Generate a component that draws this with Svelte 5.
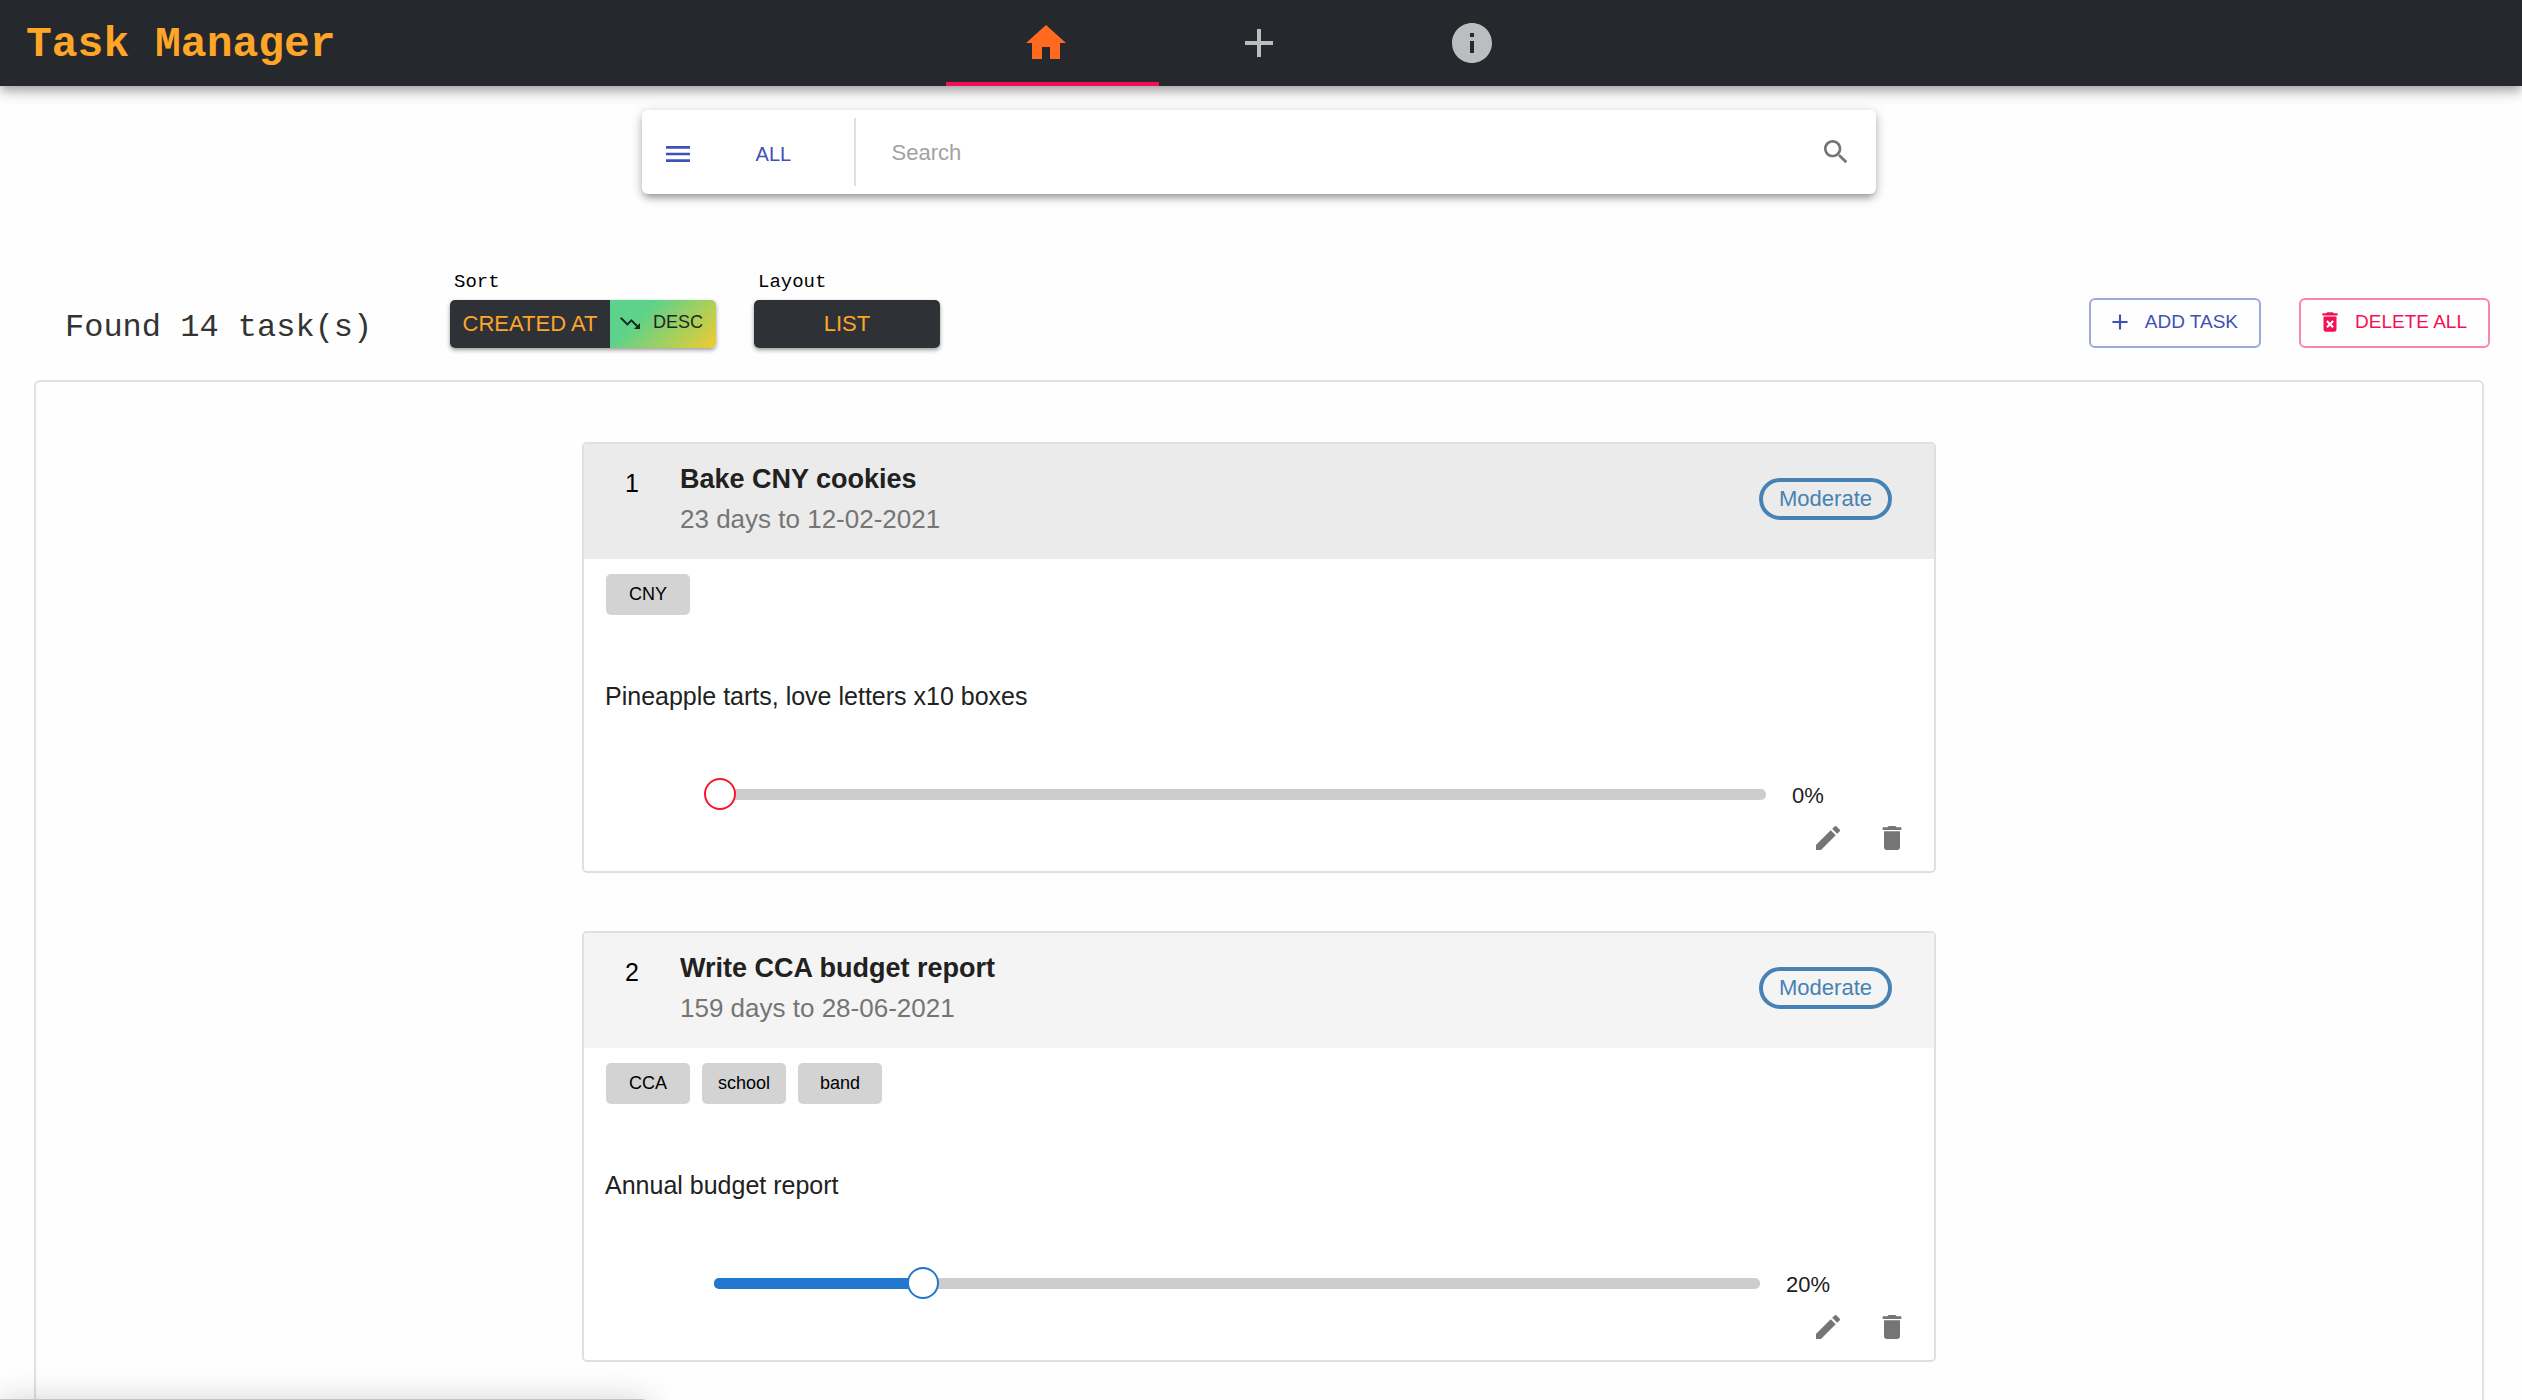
<script lang="ts">
  const icons = {
    home: 'M10 20v-6h4v6h5v-8h3L12 3 2 12h3v8z',
    add: 'M19 13h-6v6h-2v-6H5v-2h6V5h2v6h6v2z',
    info: 'M12 2C6.48 2 2 6.48 2 12s4.48 10 10 10 10-4.48 10-10S17.52 2 12 2zm1 15h-2v-6h2v6zm0-8h-2V7h2v2z',
    menu: 'M3 18h18v-2H3v2zm0-5h18v-2H3v2zm0-7v2h18V6H3z',
    search:
      'M15.5 14h-.79l-.28-.27C15.41 12.59 16 11.11 16 9.5 16 5.91 13.09 3 9.5 3S3 5.91 3 9.5 5.91 16 9.5 16c1.61 0 3.09-.59 4.23-1.57l.27.28v.79l5 4.99L20.49 19l-4.99-5zm-6 0C7.01 14 5 11.99 5 9.5S7.01 5 9.5 5 14 7.01 14 9.5 11.99 14 9.5 14z',
    down: 'M16 18l2.29-2.29-4.88-4.88-4 4L2 7.41 3.41 6l6 6 4-4 6.3 6.29L22 12v6z',
    clear:
      'M6 19c0 1.1.9 2 2 2h8c1.1 0 2-.9 2-2V7H6v12zm2.46-7.12l1.41-1.41L12 12.59l2.12-2.12 1.41 1.41L13.41 14l2.12 2.12-1.41 1.41L12 15.41l-2.12 2.12-1.41-1.41L10.59 14l-2.13-2.12zM15.5 4l-1-1h-5l-1 1H5v2h14V4z',
    edit: 'M3 17.25V21h3.75L17.81 9.94l-3.75-3.75L3 17.25zM20.71 7.04c.39-.39.39-1.02 0-1.41l-2.34-2.34c-.39-.39-1.02-.39-1.41 0l-1.83 1.83 3.75 3.75 1.83-1.83z',
    trash: 'M6 19c0 1.1.9 2 2 2h8c1.1 0 2-.9 2-2V7H6v12zM19 4h-3.5l-1-1h-5l-1 1H5v2h14V4z',
  };

  let query = $state('');

  let tasks = $state([
    {
      title: 'Bake CNY cookies',
      due: '23 days to 12-02-2021',
      priority: 'Moderate',
      tags: ['CNY'],
      details: 'Pineapple tarts, love letters x10 boxes',
      progress: 0,
      active: true,
    },
    {
      title: 'Write CCA budget report',
      due: '159 days to 28-06-2021',
      priority: 'Moderate',
      tags: ['CCA', 'school', 'band'],
      details: 'Annual budget report',
      progress: 20,
      active: false,
    },
  ]);
</script>

{#snippet icon(name: keyof typeof icons, size: string)}
  <svg class={['icon', size]} viewBox="0 0 24 24" aria-hidden="true"><path d={icons[name]} /></svg>
{/snippet}

<div class="page">
  <header class="topbar">
    <h1>Task Manager</h1>
    <nav class="tabs">
      <a class="tab selected" href="#home" aria-label="Home">{@render icon('home', 'xl')}</a>
      <a class="tab" href="#add" aria-label="Add">{@render icon('add', 'xl')}</a>
      <a class="tab" href="#about" aria-label="About">{@render icon('info', 'xl')}</a>
    </nav>
  </header>

  <div class="search-area">
    <form class="search">
      <button class="filter" type="button">{@render icon('menu', 'lg')}<span>ALL</span></button>
      <span class="divider"></span>
      <input type="text" placeholder="Search" aria-label="Search" bind:value={query} />
      <button class="go" type="button" aria-label="Run search">{@render icon('search', 'lg')}</button>
    </form>
  </div>

  <div class="toolbar">
    <p class="found">Found 14 task(s)</p>
    <div class="group">
      <span class="caption" id="sort-caption">Sort</span>
      <div class="joined" role="group" aria-labelledby="sort-caption">
        <button class="dark sort" type="button">CREATED AT</button>
        <button class="order" type="button">{@render icon('down', 'sm')}<span>DESC</span></button>
      </div>
    </div>
    <div class="group">
      <span class="caption" id="layout-caption">Layout</span>
      <div class="joined" role="group" aria-labelledby="layout-caption">
        <button class="dark layout" type="button">LIST</button>
      </div>
    </div>
    <div class="actions">
      <button class="outlined add" type="button">{@render icon('add', 'md')}<span>ADD TASK</span></button>
      <button class="outlined remove" type="button">{@render icon('clear', 'md')}<span>DELETE ALL</span></button>
    </div>
  </div>

  <main class="board">
    {#each tasks as task, i}
      <article class="card">
        <div class={['card-head', { active: task.active }]}>
          <span class="number">{i + 1}</span>
          <div class="heading">
            <h2>{task.title}</h2>
            <p>{task.due}</p>
          </div>
          <span class="pill">{task.priority}</span>
        </div>
        <div class="card-body">
          <ul class="tags">
            {#each task.tags as tag}
              <li>{tag}</li>
            {/each}
          </ul>
          <p class="details">{task.details}</p>
          <div class="progress">
            <div class={['slider', { empty: task.progress === 0 }]}>
              <div class="rail"><div class="fill" style="width: {task.progress}%"></div></div>
              <input type="range" min="0" max="100" aria-label="Progress of {task.title}" bind:value={task.progress} />
            </div>
            <output>{task.progress}%</output>
          </div>
          <div class="card-actions">
            <button type="button" aria-label="Edit">{@render icon('edit', 'lg')}</button>
            <button type="button" aria-label="Delete">{@render icon('trash', 'lg')}</button>
          </div>
        </div>
      </article>
    {/each}
  </main>

  <div class="status-edge"></div>
</div>

<style>
  :global(body) {
    background: #fefefe;
  }

  .page {
    display: flex;
    flex-direction: column;
    height: 100vh;
    overflow: hidden;
    font-family: 'Liberation Sans', Arial, sans-serif;
    color: #212121;
  }

  h1,
  h2,
  p,
  ul {
    margin: 0;
    padding: 0;
  }

  button,
  input {
    font-family: inherit;
    margin: 0;
    padding: 0;
    border: 0;
    background: none;
    box-sizing: border-box;
  }

  button {
    display: flex;
    align-items: center;
    cursor: pointer;
  }

  .icon {
    flex: none;
    display: block;
    fill: currentColor;
  }
  .sm { width: 24px; height: 24px; }
  .md { width: 26px; height: 26px; }
  .lg { width: 32px; height: 32px; }
  .xl { width: 48px; height: 48px; }

  .topbar {
    display: flex;
    flex: none;
    height: 86px;
    background: #25282d;
    box-shadow:
      0 4px 8px -2px rgba(0, 0, 0, 0.2),
      0 8px 10px rgba(0, 0, 0, 0.14),
      0 2px 20px rgba(0, 0, 0, 0.12);
  }

  h1 {
    flex: 0 0 37.5%;
    box-sizing: border-box;
    padding: 2px 0 0 26px;
    font: bold 43px/86px 'Liberation Mono', 'Courier New', monospace;
    color: #ffa527;
    white-space: nowrap;
  }

  .tabs {
    display: flex;
  }

  .tab {
    display: flex;
    align-items: center;
    justify-content: center;
    box-sizing: border-box;
    width: 213px;
    padding-right: 12px;
    color: #bcbdbf;
  }
  .tab.selected {
    color: #ff6a1f;
    box-shadow: inset 0 -4px #f50f57;
  }

  .search-area {
    flex: none;
    display: flex;
    justify-content: center;
    padding: 24px 38px 0 34px;
  }

  .search {
    display: flex;
    align-items: center;
    width: 50.4%;
    min-width: 600px;
    height: 84px;
    border-radius: 6px;
    background: #fff;
    box-shadow:
      0 6px 6px -4px rgba(0, 0, 0, 0.2),
      0 4px 8px rgba(0, 0, 0, 0.22),
      0 2px 14px rgba(0, 0, 0, 0.12);
  }

  .filter {
    flex: none;
    gap: 62px;
    width: 212px;
    height: 84px;
    padding: 4px 0 0 20px;
    font-size: 20px;
    color: #3f51b5;
  }

  .divider {
    flex: none;
    width: 2px;
    height: 68px;
    background: #e0e0e0;
  }

  .search input {
    flex: 1;
    min-width: 0;
    height: 68px;
    padding: 2px 0 0 36px;
    font-size: 22px;
    outline: none;
  }
  .search input::placeholder {
    color: #a2a2a2;
    opacity: 1;
  }

  .go {
    flex: none;
    padding-right: 24px;
    color: #757575;
  }

  .toolbar {
    flex: none;
    display: flex;
    align-items: flex-end;
    gap: 38px;
    padding: 76px 32px 32px 65px;
  }

  .found {
    flex: 0 0 347px;
    font: 32px/40px 'Liberation Mono', 'Courier New', monospace;
    color: #333;
    white-space: nowrap;
  }

  .caption {
    display: block;
    margin-bottom: 6px;
    padding-left: 4px;
    font: 19px/24px 'Liberation Mono', 'Courier New', monospace;
    color: #000;
  }

  .joined {
    display: flex;
    border-radius: 5px;
    box-shadow: 0 2px 4px rgba(0, 0, 0, 0.4);
  }

  .dark {
    justify-content: center;
    height: 48px;
    background: #2e3136;
    color: #ffa527;
    font-size: 22px;
    border-radius: 5px;
  }
  .sort {
    width: 160px;
    border-radius: 5px 0 0 5px;
  }
  .layout {
    width: 186px;
  }

  .order {
    gap: 11px;
    width: 106px;
    height: 48px;
    padding: 0 0 3px 8px;
    border-radius: 0 5px 5px 0;
    background: linear-gradient(135deg, #5dd28a 30%, #f0cc30 100%);
    font-size: 18px;
    color: #1b2a1f;
  }

  .actions {
    display: flex;
    gap: 38px;
    margin-left: auto;
  }

  .outlined {
    gap: 12px;
    height: 50px;
    padding: 0 21px 2px 16px;
    border: 2px solid;
    border-radius: 6px;
    font-size: 19px;
    white-space: nowrap;
  }
  .add {
    border-color: #9fa8da;
    color: #3f51b5;
  }
  .remove {
    border-color: #fa87ab;
    color: #f50f57;
  }

  .board {
    flex: 1;
    min-height: 0;
    display: grid;
    grid-template-columns: 546fr 1354fr 546fr;
    grid-auto-rows: max-content;
    row-gap: 58px;
    margin: 0 38px 0 34px;
    padding-top: 60px;
    border: 2px solid #e0e0e0;
    border-bottom: 0;
    border-radius: 6px 6px 0 0;
  }

  .card {
    grid-column: 2;
    border: 2px solid #e0e0e0;
    border-radius: 5px;
    overflow: hidden;
    background: #fff;
  }

  .card-head {
    display: flex;
    padding: 15px 42px 20px 0;
    background: #f4f4f4;
  }
  .card-head.active {
    background: #ebebeb;
  }

  .number {
    flex: none;
    width: 96px;
    padding-top: 4px;
    font-size: 25px;
    line-height: 40px;
    text-align: center;
    color: #000;
  }

  .heading {
    flex: 1;
    line-height: 40px;
  }
  h2 {
    font-size: 27px;
    line-height: 40px;
  }
  .heading p {
    font-size: 26px;
    color: #757575;
  }

  .pill {
    align-self: center;
    box-sizing: border-box;
    height: 42px;
    padding: 0 16px;
    border: 4px solid #4682b4;
    border-radius: 21px;
    font-size: 22px;
    line-height: 34px;
    color: #4682b4;
  }

  .card-body {
    padding: 15px 0 9px;
  }

  .tags {
    display: flex;
    gap: 12px;
    padding-left: 22px;
    list-style: none;
  }
  .tags li {
    min-width: 84px;
    border-radius: 5px;
    background: #d3d3d3;
    font-size: 18px;
    line-height: 41px;
    text-align: center;
    color: #000;
  }

  .details {
    margin-top: 61px;
    padding-left: 21px;
    font-size: 25px;
    line-height: 40px;
  }

  .progress {
    display: flex;
    align-items: center;
    justify-content: center;
    gap: 26px;
    margin-top: 62px;
    padding-left: 26px;
  }
  .progress output {
    padding-top: 4px;
    font-size: 22px;
    line-height: 28px;
  }

  .slider {
    --accent: #2277d0;
    flex: 0 0 79%;
    display: grid;
    align-items: center;
  }
  .slider.empty {
    --accent: #f8172a;
  }

  .rail,
  .slider input {
    grid-area: 1 / 1;
  }

  .rail {
    height: 11px;
    border-radius: 5px;
    background: #cdcdcd;
    overflow: hidden;
  }
  .fill {
    height: 100%;
    background: var(--accent);
  }

  /* The input overhangs the rail by half a thumb on each side. */
  .slider input {
    appearance: none;
    width: calc(100% + 32px);
    height: 32px;
    margin: 0 -16px;
    outline: none;
  }
  .slider input::-webkit-slider-thumb {
    appearance: none;
    box-sizing: border-box;
    width: 32px;
    height: 32px;
    border: 2px solid var(--accent);
    border-radius: 50%;
    background: #fff;
  }

  .card-actions {
    display: flex;
    justify-content: flex-end;
    gap: 16px;
    margin-top: 4px;
    padding-right: 18px;
  }
  .card-actions button {
    padding: 8px;
    color: #757575;
  }

  /* Top edge of the link status bubble, peeking in from below. */
  .status-edge {
    position: fixed;
    left: 0;
    bottom: -47px;
    width: 648px;
    height: 48px;
    box-sizing: border-box;
    border-top: 1px solid #c4c4c4;
    border-radius: 0 6px 0 0;
    background: #fff;
    box-shadow: 0 6px 36px rgba(0, 0, 0, 0.24);
  }
</style>
